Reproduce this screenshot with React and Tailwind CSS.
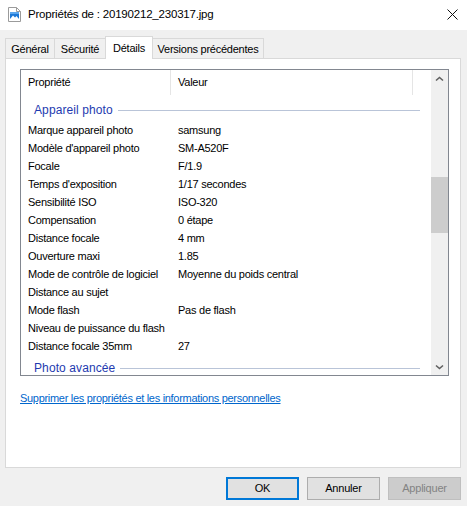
import React from "react";

const rows = [
    ["Marque appareil photo", "samsung"],
    ["Modèle d'appareil photo", "SM-A520F"],
    ["Focale", "F/1.9"],
    ["Temps d'exposition", "1/17 secondes"],
    ["Sensibilité ISO", "ISO-320"],
    ["Compensation", "0 étape"],
    ["Distance focale", "4 mm"],
    ["Ouverture maxi", "1.85"],
    ["Mode de contrôle de logiciel", "Moyenne du poids central"],
    ["Distance au sujet", ""],
    ["Mode flash", "Pas de flash"],
    ["Niveau de puissance du flash", ""],
    ["Distance focale 35mm", "27"],
];

const tabs = [
    { label: "Général", w: "w-[50px]" },
    { label: "Sécurité", w: "w-[52px]" },
    { label: "Détails", w: "w-[48px]", active: true },
    { label: "Versions précédentes", w: "w-[112px]" },
];

const FileIcon = () => (
    <svg width="13" height="15" viewBox="0 0 13 15">
        <path d="M0.5 0.5H8.5L12.5 4.5V14.5H0.5Z" fill="#fff" stroke="#9b9b9b" />
        <path d="M8.5 0.5V4.5H12.5" fill="none" stroke="#9b9b9b" />
        <rect x="2" y="5" width="9" height="7" fill="#1c78d6" />
        <rect x="2" y="5" width="9" height="2" fill="#5aa6ee" />
        <path d="M2 12L5 8.5L7 10.5L8.5 9L11 12Z" fill="#ffffff" />
    </svg>
);

const Chevron = ({ down }) => (
    <svg width="9" height="6" viewBox="0 0 9 6">
        <path
            d={down ? "M1 1.5L4.5 4.5L8 1.5" : "M1 4.5L4.5 1.5L8 4.5"}
            fill="none"
            stroke="#606060"
            strokeWidth="1.6"
        />
    </svg>
);

const GroupHeader = ({ label, top }) => (
    <div className={`flex h-[26px] items-center ${top ? "pt-[4px]" : "pt-0"}`}>
        <span className="pl-[13px] text-[12px] tracking-[0.1px] text-[#1e3ab0]">
            {label}
        </span>
        <div className="ml-[5px] mr-[11px] h-px flex-1 bg-[#b9c4d8]"></div>
    </div>
);

const Button = ({ children, primary, disabled }) => (
    <div
        className={`flex h-[23px] w-[73px] items-center justify-center text-[11px] tracking-[-0.2px] ${
            primary
                ? "border-2 border-[#0078d7] bg-[#e1e1e1] text-black"
                : disabled
                  ? "border border-[#bfbfbf] bg-[#cccccc] text-[#838383]"
                  : "border border-[#adadad] bg-[#e1e1e1] text-black"
        }`}
    >
        {children}
    </div>
);

export default function App() {
    return (
        <div className="flex h-[506px] w-[467px] flex-col overflow-hidden bg-[#f0f0f0] font-['Liberation_Sans',Arial,sans-serif] text-[11px] text-black">
            {/* Title bar */}
            <div className="flex h-[30px] shrink-0 items-center bg-white">
                <div className="ml-[8px] mt-[-2px]">
                    <FileIcon />
                </div>
                <span className="ml-[7px] text-[11.5px] tracking-[-0.2px]">
                    Propriétés de : 20190212_230317.jpg
                </span>
                <div className="ml-auto mr-[9px] mt-[-2px]">
                    <svg width="11" height="11" viewBox="0 0 11 11">
                        <path d="M0.5 0.5L10.5 10.5M10.5 0.5L0.5 10.5" stroke="#111" strokeWidth="1" />
                    </svg>
                </div>
            </div>

            {/* Tabs + panel */}
            <div className="px-[5px] pt-[6px]">
                <div className="flex h-[22px] items-end pl-[1px]">
                    {tabs.map((tab) =>
                        tab.active ? (
                            <div
                                key={tab.label}
                                className={`relative z-10 -mb-px -ml-px flex h-[23px] ${tab.w} items-start justify-center border border-b-0 border-[#d9d9d9] bg-white pt-[3px] tracking-[-0.25px]`}
                            >
                                {tab.label}
                            </div>
                        ) : (
                            <div
                                key={tab.label}
                                className={`-ml-px flex h-[20px] ${tab.w} items-center justify-center border border-b-0 border-[#d9d9d9] bg-[#f0f0f0] pt-[1px] tracking-[-0.25px]`}
                            >
                                {tab.label}
                            </div>
                        ),
                    )}
                </div>

                <div className="flex h-[410px] w-[456px] flex-col border border-[#d9d9d9] bg-white pl-[14px] pt-[10px]">
                    {/* List view */}
                    <div className="flex h-[307px] w-[429px] border border-[#828790] bg-white">
                        <div className="flex-1 overflow-hidden">
                            <div className="flex h-[25px] items-stretch">
                                <div className="flex w-[150px] items-center border-r border-[#e5e5e5] pl-[7px] tracking-[-0.25px]">
                                    Propriété
                                </div>
                                <div className="flex w-[242px] items-center border-r border-[#e5e5e5] pl-[7px] tracking-[-0.25px]">
                                    Valeur
                                </div>
                            </div>
                            <GroupHeader label="Appareil photo" top />
                            {rows.map(([name, value]) => (
                                <div key={name} className="flex h-[18px] items-center tracking-[-0.25px]">
                                    <div className="w-[150px] whitespace-nowrap pl-[7px]">{name}</div>
                                    <div className="whitespace-nowrap pl-[7px]">{value}</div>
                                </div>
                            ))}
                            <GroupHeader label="Photo avancée" />
                        </div>

                        {/* Scrollbar */}
                        <div className="flex w-[17px] flex-col bg-[#f0f0f0]">
                            <div className="flex h-[17px] items-center justify-center">
                                <Chevron />
                            </div>
                            <div className="flex-1">
                                <div className="mt-[90px] h-[56px] bg-[#cdcdcd]"></div>
                            </div>
                            <div className="flex h-[17px] items-center justify-center">
                                <Chevron down />
                            </div>
                        </div>
                    </div>

                    <div className="mt-[15px] h-[14px] leading-[14px]">
                        <span className="text-[#0066cc] underline tracking-[-0.3px]">
                            Supprimer les propriétés et les informations personnelles
                        </span>
                    </div>
                </div>
            </div>

            {/* Buttons */}
            <div className="mr-[6px] mt-[9px] flex justify-end gap-[8px]">
                <Button primary>OK</Button>
                <Button>Annuler</Button>
                <Button disabled>Appliquer</Button>
            </div>
        </div>
    );
}
